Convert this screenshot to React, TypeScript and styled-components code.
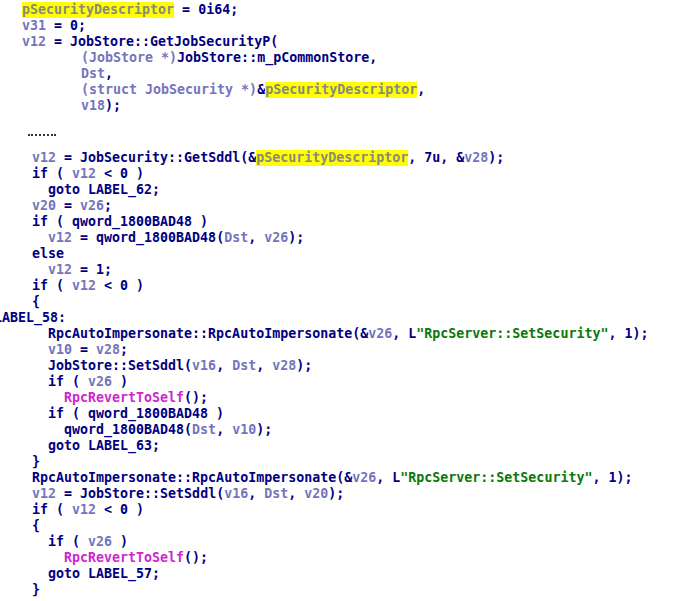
import React from "react";
import styled, { createGlobalStyle } from "styled-components";

const Global = createGlobalStyle`
  html, body {
    margin: 0;
    padding: 0;
    background: #ffffff;
    overflow: hidden;
  }
`;

const Page = styled.div`
  width: 684px;
  height: 601px;
  background: #ffffff;
  overflow: hidden;
  padding-top: 2px;
  box-sizing: border-box;
  font-family: "DejaVu Sans Mono", "Liberation Mono", monospace;
  font-weight: bold;
  font-size: 13.3px;
  color: #000080;
`;

const Block = styled.div<{ $base: number }>`
  display: flex;
  flex-direction: column;
  padding-left: ${(p) => p.$base}px;
`;

const Line = styled.div<{ $indent?: number }>`
  height: 16px;
  line-height: 16px;
  white-space: pre;
  margin-left: ${(p) => p.$indent ?? 0}px;
`;

const Var = styled.span`
  color: #7474bc;
`;

const Cast = styled.span`
  color: #7474bc;
`;

const Hl = styled.span`
  color: #8a8a7a;
  background: #ffff00;
  display: inline-block;
  height: 16px;
`;

const Str = styled.span`
  color: #0a780a;
`;

const Imp = styled.span`
  color: #cc28cc;
`;

const Separator = styled.div`
  margin: 20px 0 14px 28px;
  width: 28px;
  height: 0;
  border-top: 2px dotted #30304a;
`;

const PSD = () => <Hl>pSecurityDescriptor</Hl>;

const Rpc = () => (
  <>
    RpcAutoImpersonate::RpcAutoImpersonate(&amp;<Var>v26</Var>, L
    <Str>"RpcServer::SetSecurity"</Str>, 1);
  </>
);

export default function App() {
  return (
    <>
      <Global />
      <Page>
        <Block $base={22}>
          <Line>
            <PSD /> = 0i64;
          </Line>
          <Line>
            <Var>v31</Var> = 0;
          </Line>
          <Line>
            <Var>v12</Var> = JobStore::GetJobSecurityP(
          </Line>
          <Line $indent={59}>
            <Cast>(JobStore *)</Cast>JobStore::m_pCommonStore,
          </Line>
          <Line $indent={59}>
            <Var>Dst</Var>,
          </Line>
          <Line $indent={59}>
            <Cast>(struct JobSecurity *)</Cast>&amp;<PSD />,
          </Line>
          <Line $indent={59}>
            <Var>v18</Var>);
          </Line>
        </Block>
        <Separator />
        <Block $base={32}>
          <Line>
            <Var>v12</Var> = JobSecurity::GetSddl(&amp;<PSD />, 7u, &amp;
            <Var>v28</Var>);
          </Line>
          <Line>
            if ( <Var>v12</Var> &lt; 0 )
          </Line>
          <Line $indent={16}>goto LABEL_62;</Line>
          <Line>
            <Var>v20</Var> = <Var>v26</Var>;
          </Line>
          <Line>if ( qword_1800BAD48 )</Line>
          <Line $indent={16}>
            <Var>v12</Var> = qword_1800BAD48(<Var>Dst</Var>, <Var>v26</Var>);
          </Line>
          <Line>else</Line>
          <Line $indent={16}>
            <Var>v12</Var> = 1;
          </Line>
          <Line>
            if ( <Var>v12</Var> &lt; 0 )
          </Line>
          <Line>{"{"}</Line>
          <Line $indent={-38}>LABEL_58:</Line>
          <Line $indent={16}>
            <Rpc />
          </Line>
          <Line $indent={16}>
            <Var>v10</Var> = <Var>v28</Var>;
          </Line>
          <Line $indent={16}>
            JobStore::SetSddl(<Var>v16</Var>, <Var>Dst</Var>, <Var>v28</Var>);
          </Line>
          <Line $indent={16}>
            if ( <Var>v26</Var> )
          </Line>
          <Line $indent={32}>
            <Imp>RpcRevertToSelf</Imp>();
          </Line>
          <Line $indent={16}>if ( qword_1800BAD48 )</Line>
          <Line $indent={32}>
            qword_1800BAD48(<Var>Dst</Var>, <Var>v10</Var>);
          </Line>
          <Line $indent={16}>goto LABEL_63;</Line>
          <Line>{"}"}</Line>
          <Line>
            <Rpc />
          </Line>
          <Line>
            <Var>v12</Var> = JobStore::SetSddl(<Var>v16</Var>, <Var>Dst</Var>, <Var>v20</Var>);
          </Line>
          <Line>
            if ( <Var>v12</Var> &lt; 0 )
          </Line>
          <Line>{"{"}</Line>
          <Line $indent={16}>
            if ( <Var>v26</Var> )
          </Line>
          <Line $indent={32}>
            <Imp>RpcRevertToSelf</Imp>();
          </Line>
          <Line $indent={16}>goto LABEL_57;</Line>
          <Line>{"}"}</Line>
        </Block>
      </Page>
    </>
  );
}
